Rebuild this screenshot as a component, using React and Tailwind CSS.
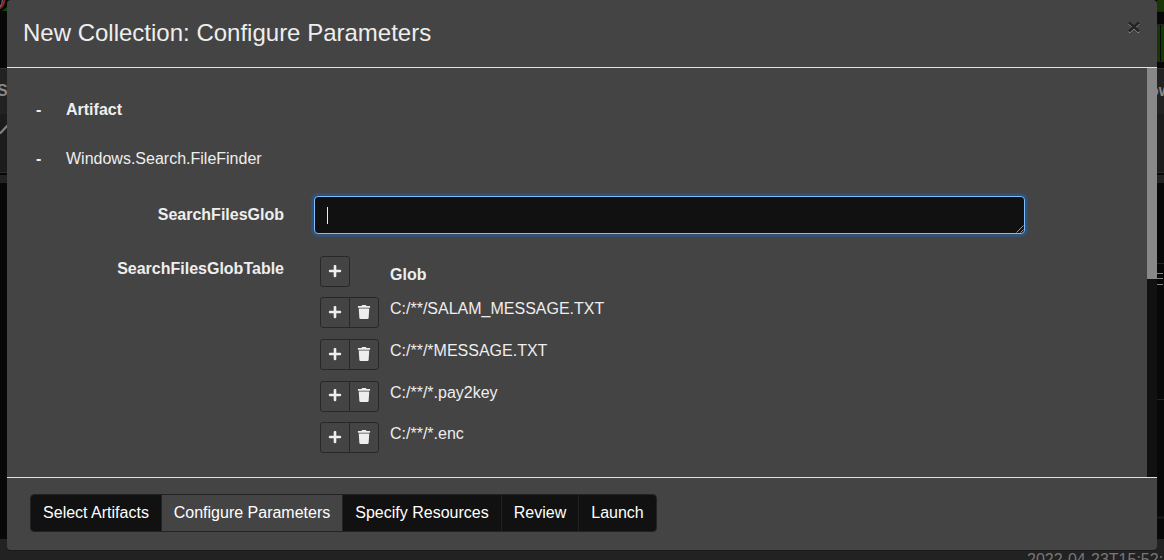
import { FaPlus, FaTrash } from "react-icons/fa";

const globs = [
  { path: "C:/**/SALAM_MESSAGE.TXT", row: "h-[42px]", icon: "pb-[2px]" },
  { path: "C:/**/*MESSAGE.TXT", row: "h-[42px]", icon: "pb-[2px]" },
  { path: "C:/**/*.pay2key", row: "h-[41px]", icon: "pb-[4px]" },
  { path: "C:/**/*.enc", row: "h-[42px]", icon: "pb-[2px]" },
];

const steps = [
  { label: "Select Artifacts", width: "w-[131px]" },
  { label: "Configure Parameters", width: "w-[181px]", active: true },
  { label: "Specify Resources", width: "w-[159px]" },
  { label: "Review", width: "w-[77px]" },
  { label: "Launch", width: "w-[77px]" },
];

function Backdrop() {
  return (
    <div className="flex h-full flex-col bg-[#080808]">
      <div className="flex h-[68px] justify-between">
        <svg className="h-[12px] w-[7px]" viewBox="0 0 7 12">
          <path d="M2 11h5v-4z" fill="#0b4a0b" />
          <path d="M0 8.5Q4.500 5 4.500-1" fill="none" stroke="#8a2020" strokeWidth="2" />
          <path d="M0 7Q2.500 4 2.500-1" fill="none" stroke="#888" strokeWidth="1" />
        </svg>
        <div className="flex w-[7px] flex-col">
          <div className="h-[12px] border-b border-[#222] bg-[#173806]" />
          <div className="mt-[12px] flex h-[38px] gap-px border-y border-[#222]">
            <div className="w-[3px] bg-[#173806]" />
            <div className="w-[3px] bg-[#173806]" />
          </div>
        </div>
      </div>
      <div className="flex h-[46px] items-center justify-between overflow-hidden border-t border-[#303030] bg-[#222] pb-[2px] text-[16px] font-bold text-[#888]">
        <span className="w-[7px] overflow-hidden"><span className="-ml-[3px]">S</span></span>
        <span className="flex w-[7px] overflow-hidden"><span className="-ml-[8px]">ow</span></span>
      </div>
      <div className="h-[59px] border-b border-[#2b2b2b] bg-[#1c1c1c]">
        <svg className="mt-[9px] h-[14px] w-[8px]" viewBox="0 0 8 14">
          <path d="M0 10.500 8 2" stroke="#858585" strokeWidth="2.200" />
        </svg>
      </div>
      <div className="mt-[2px] h-[8px] bg-[#222]" />
      <div className="flex flex-1 flex-col items-end">
        <div className="mt-[80px] h-px w-[7px] bg-[#242424]" />
        <div className="mt-[9px] h-px w-[7px] pr-px"><div className="h-px bg-[#858585]" /></div>
        <div className="mt-[4px] h-px w-[7px] pr-px"><div className="h-px bg-[#858585]" /></div>
        <div className="mt-[5px] h-px w-[7px] pr-px"><div className="h-px bg-[#858585]" /></div>
        <div className="mt-[114px] h-px w-[7px] bg-[#222]" />
        <div className="mt-[116px] h-[3px] w-[7px] bg-[#151515]" />
      </div>
      <div className="h-[21px] overflow-hidden bg-[#222] pt-[12px] pl-[1027px] text-[16px] leading-[18px] whitespace-nowrap text-[#777]">
        2022-04-23T15:52:
      </div>
    </div>
  );
}

function IconButton({ children, className = "" }) {
  return (
    <button className={`flex h-[31px] items-center justify-center border border-[#282828] text-[14px] text-[#eee] ${className}`}>
      {children}
    </button>
  );
}

function Header() {
  return (
    <header className="flex h-[68px] justify-between border-b border-[#dee2e6] px-[16px]">
      <h4 className="pt-[15px] text-[24px] leading-[36px]">New Collection: Configure Parameters</h4>
      <button className="mt-[18px] h-[16px] w-[14px]" aria-label="Close">
        <svg className="h-[16px] w-[14px]" viewBox="0 0 14 16">
          <path d="m2 5.500 10 9m0-9-10 9" stroke="#a5a5a5" strokeWidth="2" />
          <path d="m2 4.500 10 9m0-9-10 9" stroke="#232323" strokeWidth="2.400" />
        </svg>
      </button>
    </header>
  );
}

function Body() {
  return (
    <div className="flex h-[409px]">
      <div className="min-w-0 flex-1">
        <div className="flex h-[66px] pt-[30px] pl-[29px] leading-[24px] font-bold">
          <span className="w-[30px]">-</span>
          <span>Artifact</span>
        </div>
        <div className="flex h-[62px] pt-[13px] pl-[29px] leading-[24px]">
          <span className="w-[30px] font-bold">-</span>
          <span>Windows.Search.FileFinder</span>
        </div>
        <div className="flex h-[60px]">
          <label className="w-[277px] pt-[7px] text-right leading-[24px] font-bold">SearchFilesGlob</label>
          <div className="ml-[30px] flex h-[38px] w-[711px] items-center justify-between rounded-[4px] border border-[#80bdff] bg-[#111] pl-[12px] shadow-[0_0_0_3px_#32506f]">
            <span className="h-[17px] w-px bg-[#eee]" />
            <svg className="h-[8px] w-[8px] self-end" viewBox="0 0 8 8">
              <path d="M.5 7.500 7.500.5M4.500 7.500l3-3" stroke="#bbb" strokeWidth=".8" />
            </svg>
          </div>
        </div>
        <div className="flex">
          <label className="w-[277px] pt-px text-right leading-[24px] font-bold">SearchFilesGlobTable</label>
          <div className="ml-[36px]">
            <div className="flex h-[41px]">
              <IconButton className="w-[30px] rounded-[3px] pb-[2px]"><FaPlus /></IconButton>
              <span className="ml-[40px] pt-[7px] leading-[24px] font-bold">Glob</span>
            </div>
            {globs.map((glob) => (
              <div key={glob.path} className={`flex ${glob.row}`}>
                <IconButton className={`w-[30px] rounded-l-[3px] ${glob.icon}`}><FaPlus /></IconButton>
                <IconButton className={`-ml-px w-[30px] rounded-r-[3px] ${glob.icon}`}><FaTrash /></IconButton>
                <span className="ml-[11px] leading-[24px]">{glob.path}</span>
              </div>
            ))}
          </div>
        </div>
      </div>
      <div className="w-[10px] bg-[#111]">
        <div className="h-[211px] bg-[#888]" />
      </div>
    </div>
  );
}

function Footer() {
  return (
    <footer className="flex h-[73px] border-t border-[#dee2e6] pt-[16px] pl-[23px]">
      <nav className="flex h-[38px] overflow-hidden rounded-[4px] border border-[#222]">
        {steps.map((step, i) => (
          <button
            key={step.label}
            className={`whitespace-nowrap text-white ${step.width} ${step.active ? "bg-[#444]" : "bg-[#111]"} ${i < steps.length - 1 ? "border-r border-[#222]" : ""}`}
          >
            {step.label}
          </button>
        ))}
      </nav>
    </footer>
  );
}

export default function App() {
  return (
    <div className="relative h-[560px] w-[1164px] overflow-hidden font-['Liberation_Sans',Arial,sans-serif] text-[16px]">
      <Backdrop />
      <main className="absolute top-0 left-[7px] h-[550px] w-[1150px] rounded-[4px] bg-[#444] text-[#eee] shadow-[0_1px_0_#1b1b1b]">
        <Header />
        <Body />
        <Footer />
      </main>
    </div>
  );
}
